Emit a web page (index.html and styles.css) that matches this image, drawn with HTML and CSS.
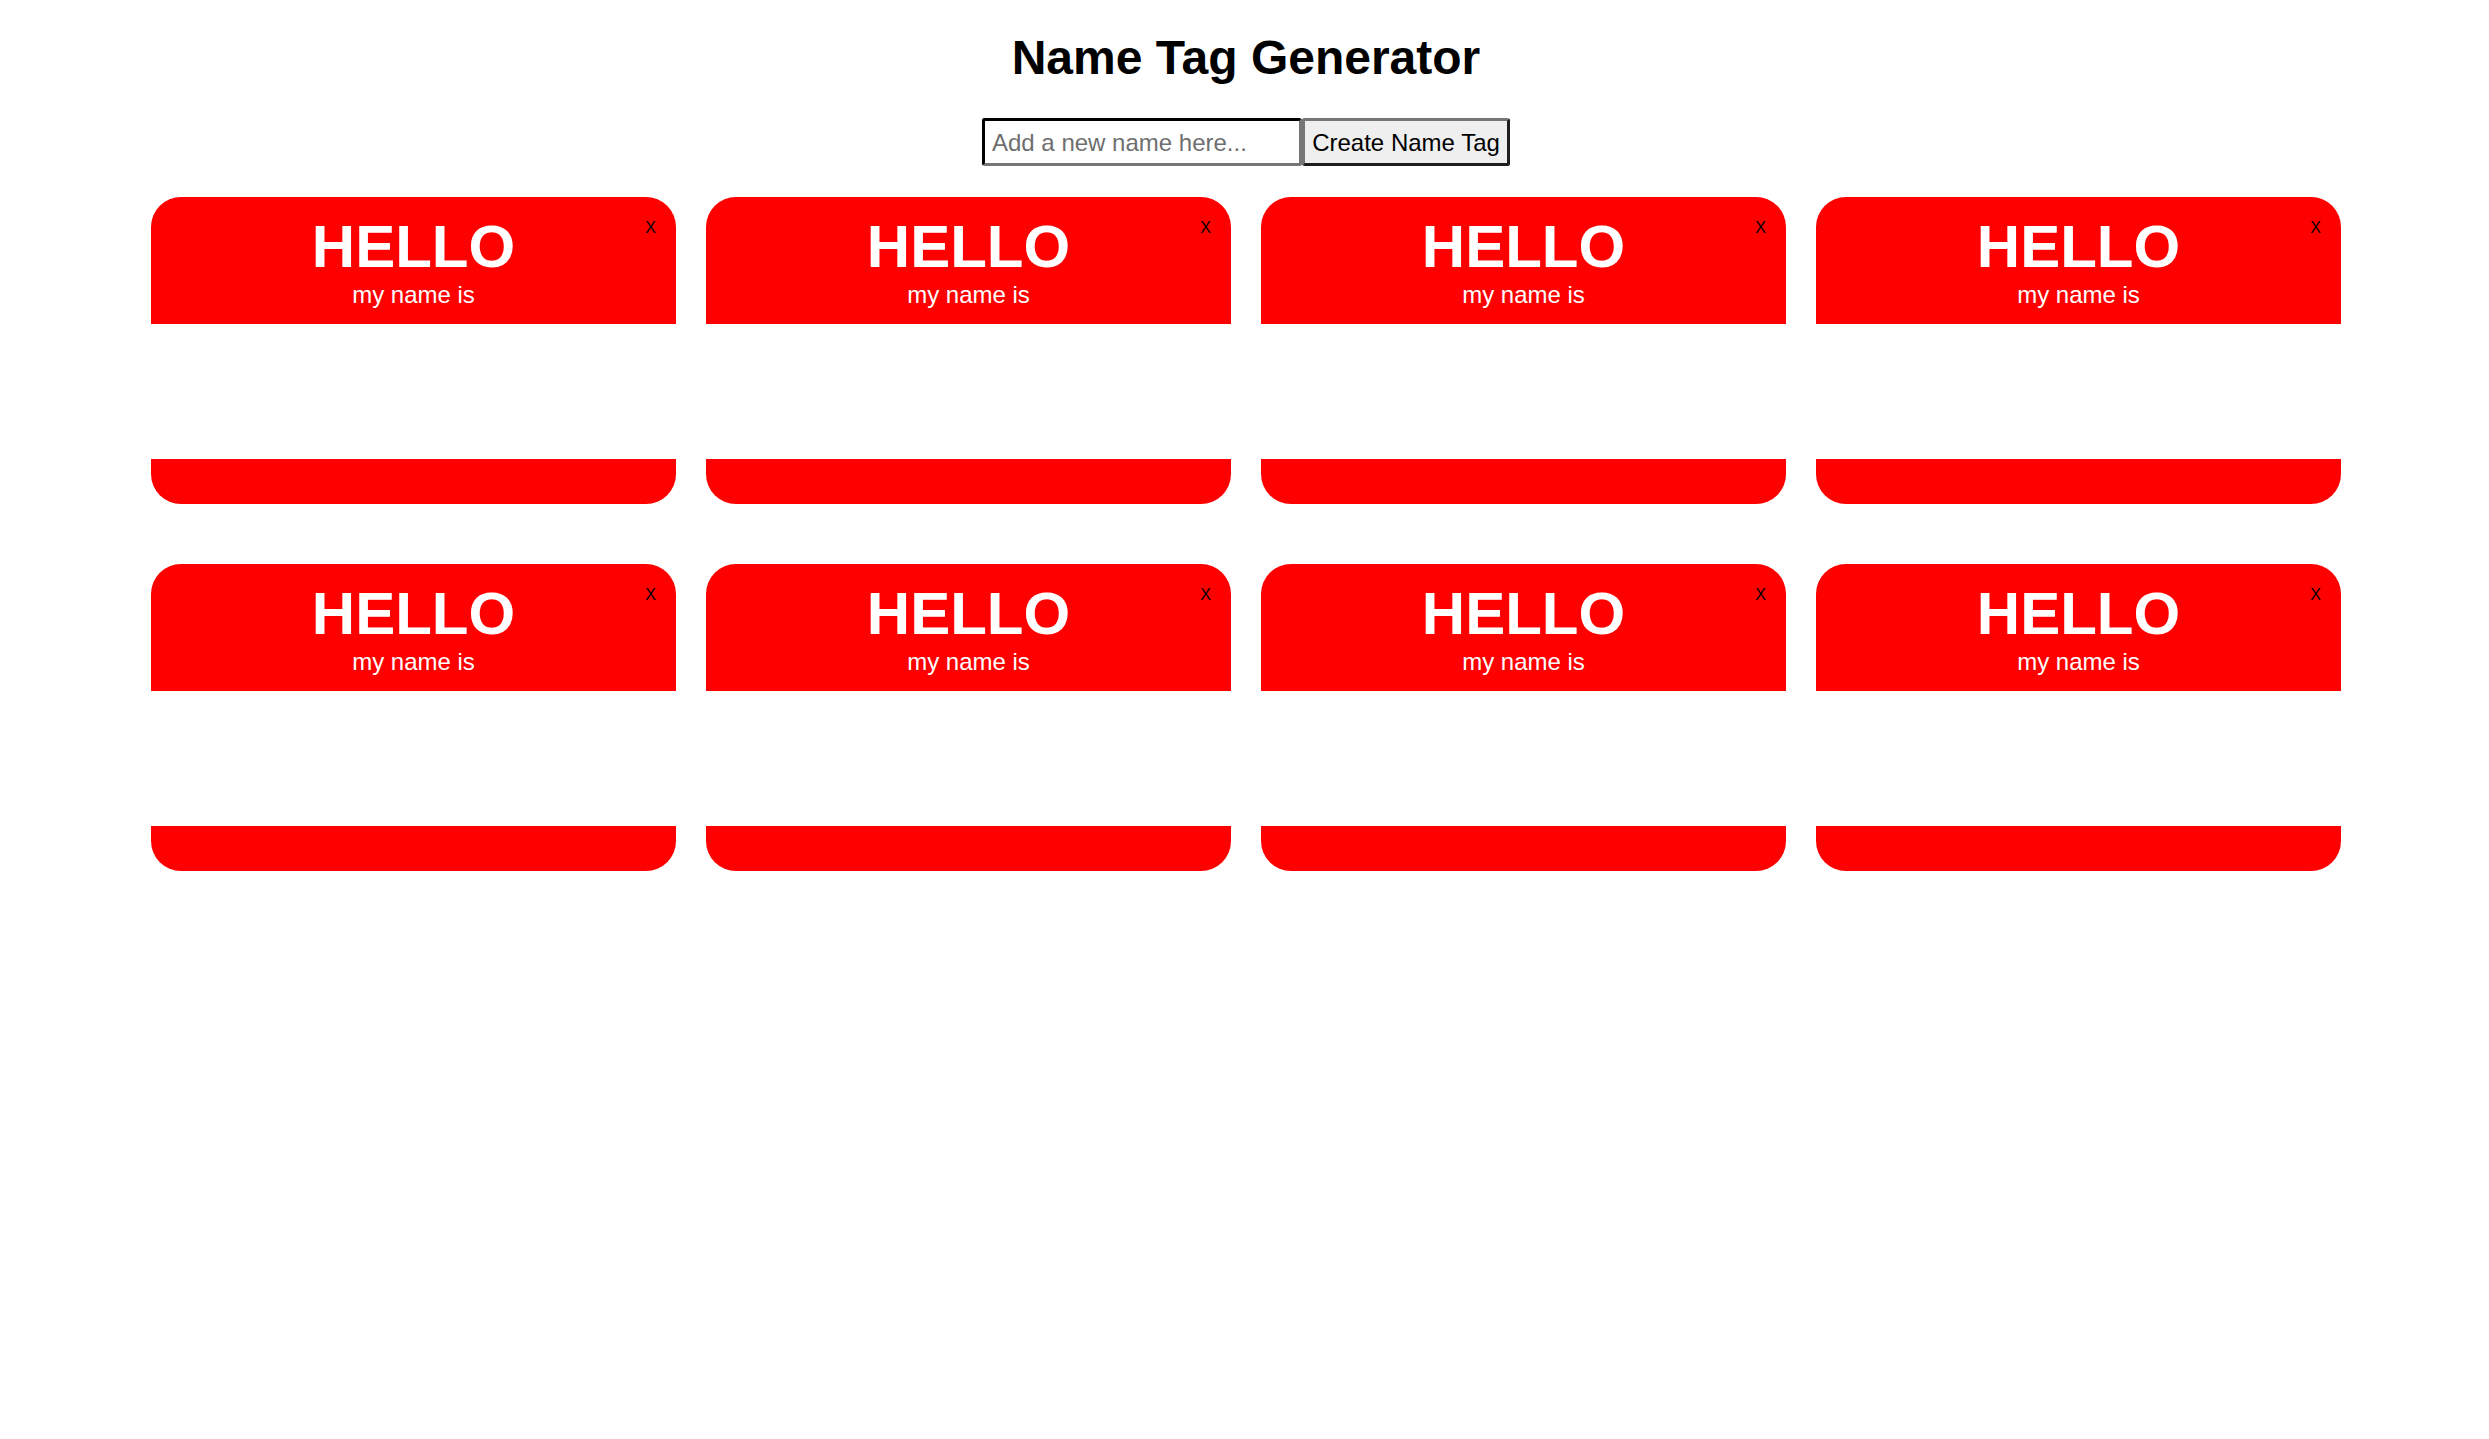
FILE: index.html
```html
<!DOCTYPE html>
<html lang="en">
<head>
<meta charset="utf-8">
<title>Name Tag Generator</title>
<link rel="stylesheet" href="styles.css">
</head>
<body>
<h1 class="title">Name Tag Generator</h1>
<form class="add-form">
  <input class="name-input" type="text" placeholder="Add a new name here...">
  <button class="create-btn" type="button">Create Name Tag</button>
</form>
<div class="tags">
  <div class="tag">
    <span class="close">X</span>
    <div class="tag-head"><div class="hello">HELLO</div><div class="subtitle">my name is</div></div>
    <div class="tag-body"></div>
    <div class="tag-foot"></div>
  </div>
  <div class="tag">
    <span class="close">X</span>
    <div class="tag-head"><div class="hello">HELLO</div><div class="subtitle">my name is</div></div>
    <div class="tag-body"></div>
    <div class="tag-foot"></div>
  </div>
  <div class="tag">
    <span class="close">X</span>
    <div class="tag-head"><div class="hello">HELLO</div><div class="subtitle">my name is</div></div>
    <div class="tag-body"></div>
    <div class="tag-foot"></div>
  </div>
  <div class="tag">
    <span class="close">X</span>
    <div class="tag-head"><div class="hello">HELLO</div><div class="subtitle">my name is</div></div>
    <div class="tag-body"></div>
    <div class="tag-foot"></div>
  </div>
  <div class="tag">
    <span class="close">X</span>
    <div class="tag-head"><div class="hello">HELLO</div><div class="subtitle">my name is</div></div>
    <div class="tag-body"></div>
    <div class="tag-foot"></div>
  </div>
  <div class="tag">
    <span class="close">X</span>
    <div class="tag-head"><div class="hello">HELLO</div><div class="subtitle">my name is</div></div>
    <div class="tag-body"></div>
    <div class="tag-foot"></div>
  </div>
  <div class="tag">
    <span class="close">X</span>
    <div class="tag-head"><div class="hello">HELLO</div><div class="subtitle">my name is</div></div>
    <div class="tag-body"></div>
    <div class="tag-foot"></div>
  </div>
  <div class="tag">
    <span class="close">X</span>
    <div class="tag-head"><div class="hello">HELLO</div><div class="subtitle">my name is</div></div>
    <div class="tag-body"></div>
    <div class="tag-foot"></div>
  </div>
</div>
</body>
</html>
```
FILE: styles.css
```css
html, body {
  margin: 0;
  padding: 0;
  background: #ffffff;
}
body {
  font-family: "Liberation Sans", Arial, sans-serif;
  color: #000;
}
.title {
  margin: 0;
  padding-top: 31px;
  padding-left: 3px;
  font-size: 48px;
  line-height: 54px;
  font-weight: bold;
  text-align: center;
}
.add-form {
  margin: 33px 0 0;
  display: flex;
  justify-content: center;
  padding-left: 3px;
}
.name-input {
  box-sizing: border-box;
  width: 320px;
  height: 48px;
  margin: 0;
  padding: 2px 7px 0;
  border: 3px inset #767676;
  border-top-color: #1f1f1f;
  border-left-color: #1f1f1f;
  border-right-color: #767676;
  border-bottom-color: #767676;
  border-radius: 3px;
  font-family: "Liberation Sans", Arial, sans-serif;
  font-size: 24px;
  color: #000;
  background: #fff;
  outline: none;
}
.name-input::placeholder {
  color: #6f6f6f;
}
.create-btn {
  box-sizing: border-box;
  width: 208px;
  height: 48px;
  margin: 0;
  padding: 2px 7px 0;
  border: 3px solid #1f1f1f;
  border-top-color: #767676;
  border-left-color: #767676;
  border-radius: 3px;
  background: #efefef;
  font-family: "Liberation Sans", Arial, sans-serif;
  font-size: 24px;
  color: #000;
}
.tags {
  margin-top: 31px;
  display: grid;
  grid-template-columns: repeat(4, 525px);
  column-gap: 30px;
  row-gap: 60px;
  justify-content: center;
  padding-left: 3px;
}
.tag {
  position: relative;
  height: 307px;
  display: flex;
  flex-direction: column;
}
.tag-head {
  height: 127px;
  background: #ff0000;
  border-radius: 30px 30px 0 0;
  color: #fff;
  text-align: center;
  padding-top: 16px;
  box-sizing: border-box;
}
.hello {
  font-size: 60px;
  font-weight: bold;
  line-height: 68px;
}
.subtitle {
  font-size: 24px;
  line-height: 28px;
}
.tag-body {
  height: 135px;
  background: #fff;
}
.tag-foot {
  height: 45px;
  background: #ff0000;
  border-radius: 0 0 30px 30px;
}
.close {
  position: absolute;
  top: 22px;
  right: 20px;
  font-size: 16px;
  line-height: 18px;
  color: #000;
  cursor: pointer;
}
```
